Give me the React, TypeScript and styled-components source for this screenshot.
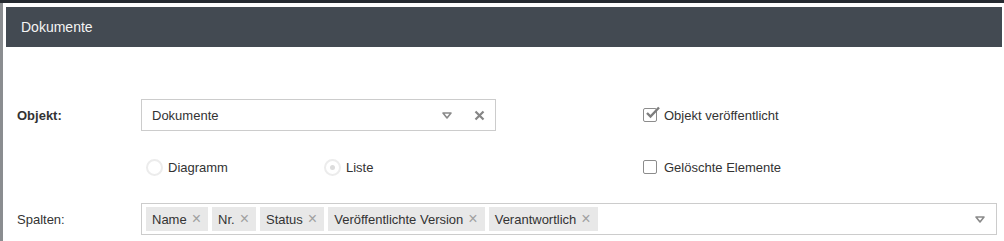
import styled, { createGlobalStyle } from "styled-components";

const GlobalStyle = createGlobalStyle`
  html, body {
    margin: 0;
    padding: 0;
    background: #8a8d90;
  }
  body {
    font-family: "Liberation Sans", Arial, sans-serif;
    font-size: 13px;
    color: #333;
  }
`;

const Backdrop = styled.div`
  width: 1004px;
  height: 241px;
  overflow: hidden;
  border-top: 3px solid #262b31;
  padding-left: 3px;
  box-sizing: border-box;
  background: linear-gradient(to right, #8a8d90 0, #8a8d90 3px, #262b31 3px);
`;

const Modal = styled.div`
  background: #fff;
  height: 100%;
  padding: 4px 2px 0 3px;
  box-sizing: border-box;
`;

const Header = styled.div`
  height: 40px;
  background: #434a52;
  color: #f4f4f4;
  font-size: 14px;
  display: flex;
  align-items: center;
  padding-left: 15px;
  padding-bottom: 1px;
  box-sizing: border-box;
`;

const Form = styled.div`
  display: grid;
  grid-template-columns: 124px 501px 1fr;
  grid-auto-rows: 52px;
  align-items: center;
  padding: 42px 5px 0 11px;
`;

const Label = styled.div<{ $bold?: boolean }>`
  font-weight: ${(p) => (p.$bold ? 700 : 400)};
  padding-top: 1px;
`;

const Select = styled.div<{ $wide?: boolean }>`
  height: 32px;
  box-sizing: border-box;
  border: 1px solid #ccc;
  display: flex;
  align-items: center;
  width: ${(p) => (p.$wide ? "856px" : "355px")};
  padding: 0 4px 0 10px;
  gap: 4px;
  ${(p) => p.$wide && "grid-column: 2 / 4; padding-left: 4px;"}
`;

const Value = styled.span`
  flex: 1;
`;

const IconBtn = styled.span<{ $w?: number; $mr?: number }>`
  width: ${(p) => p.$w ?? 16}px;
  margin-right: ${(p) => p.$mr ?? 0}px;
  display: inline-flex;
  justify-content: center;
  align-items: center;
  color: #888;
`;

const Spacer = styled.div`
  flex: 1;
`;

const Tag = styled.span`
  display: inline-flex;
  align-items: center;
  height: 24px;
  background: #e8e8e8;
  padding: 0 7px 0 6px;
  white-space: nowrap;
  color: #333;
`;

const TagX = styled.span`
  color: #a0a0a0;
  font-size: 16px;
  line-height: 1;
  margin-left: 5px;
`;

const Check = styled.label`
  display: flex;
  align-items: center;
  gap: 7px;
  padding-left: 1px;
`;

const Box = styled.span`
  position: relative;
  width: 14px;
  height: 14px;
  box-sizing: border-box;
  border: 1px solid #8c8c8c;
  border-radius: 2px;
  background: #fff;
`;

const Tick = styled.svg`
  position: absolute;
  left: 1px;
  top: -3px;
`;

const Radios = styled.div`
  display: flex;
  align-items: center;
`;

const Radio = styled.label<{ $w?: number }>`
  display: flex;
  align-items: center;
  gap: 5px;
  width: ${(p) => p.$w ?? 0}px;
  padding-left: 5px;
`;

const Circle = styled.span<{ $on?: boolean }>`
  width: 17px;
  height: 17px;
  box-sizing: border-box;
  border: 2px solid #ececec;
  border-radius: 50%;
  display: inline-flex;
  align-items: center;
  justify-content: center;
  &::after {
    content: "";
    width: 5px;
    height: 5px;
    border-radius: 50%;
    background: ${(p) => (p.$on ? "#dcdcdc" : "transparent")};
  }
`;

function Caret() {
  return (
    <svg width="10" height="7" viewBox="0 0 10 7">
      <path d="M1 1 H9 L5 6 Z" fill="none" stroke="#8a8a8a" strokeWidth="1.6" strokeLinejoin="round" />
    </svg>
  );
}

function Cross() {
  return (
    <svg width="11" height="11" viewBox="0 0 11 11">
      <path d="M1.5 1.5 L9.5 9.5 M9.5 1.5 L1.5 9.5" stroke="#858585" strokeWidth="2.2" />
    </svg>
  );
}

const columns = ["Name", "Nr.", "Status", "Veröffentlichte Version", "Verantwortlich"];

export default function App() {
  return (
    <Backdrop>
      <GlobalStyle />
      <Modal>
        <Header>Dokumente</Header>
        <Form>
          <Label $bold>Objekt:</Label>
          <Select>
            <Value>Dokumente</Value>
            <IconBtn $w={22} $mr={5}>
              <Caret />
            </IconBtn>
            <IconBtn $w={24}>
              <Cross />
            </IconBtn>
          </Select>
          <Check>
            <Box>
              <Tick width="16" height="14" viewBox="0 0 16 14">
                <path d="M2 7 L5.5 10.5 L14 1.5" fill="none" stroke="#7d7d7d" strokeWidth="2.4" />
              </Tick>
            </Box>
            Objekt veröffentlicht
          </Check>

          <div />
          <Radios>
            <Radio $w={173}>
              <Circle />
              Diagramm
            </Radio>
            <Radio $w={80}>
              <Circle $on />
              Liste
            </Radio>
          </Radios>
          <Check>
            <Box />
            Gelöschte Elemente
          </Check>

          <Label>Spalten:</Label>
          <Select $wide>
            {columns.map((c) => (
              <Tag key={c}>
                {c}
                <TagX>×</TagX>
              </Tag>
            ))}
            <Spacer />
            <IconBtn $w={24}>
              <Caret />
            </IconBtn>
          </Select>
        </Form>
      </Modal>
    </Backdrop>
  );
}
